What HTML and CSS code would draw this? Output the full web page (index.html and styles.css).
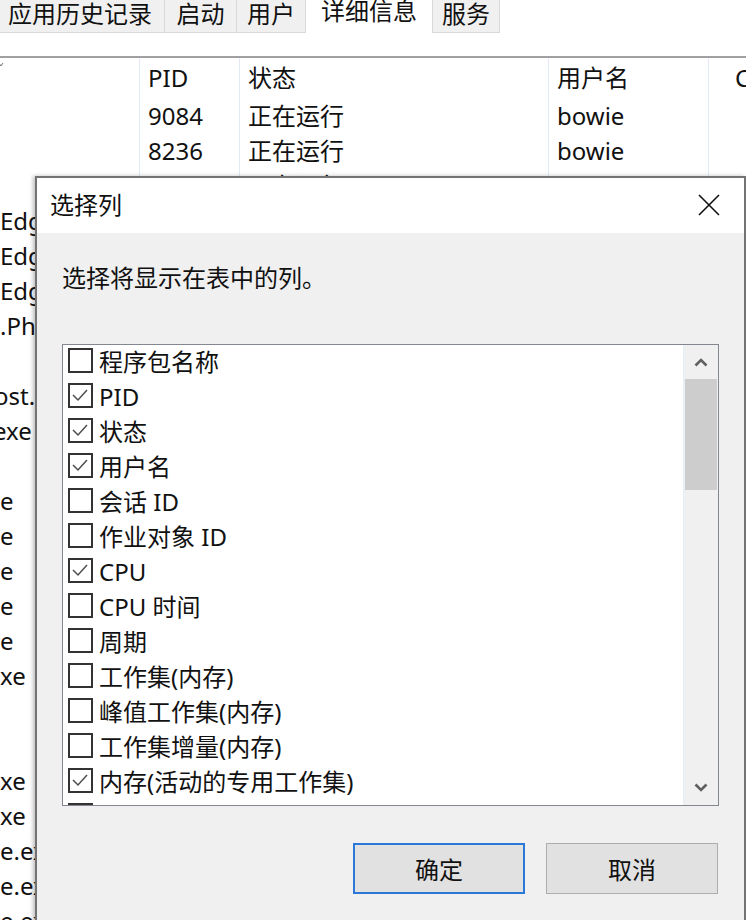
FILE: index.html
```html
<!DOCTYPE html>
<html lang="zh-CN">
<head>
<meta charset="utf-8">
<title>选择列</title>
<link rel="stylesheet" href="styles.css">
</head>
<body>
<div class="page">
  <div class="tabs">
    <div class="tab t1">应用历史记录</div>
    <div class="tab t2">启动</div>
    <div class="tab t3">用户</div>
    <div class="tab t4 active">详细信息</div>
    <div class="tab t5">服务</div>
  </div>

  <div class="table">
    <div class="row head">
      <div class="cell name"><svg class="sort" width="6" height="6" viewBox="0 0 6 6"><path d="M0 1 L2 4 L4 1" fill="none" stroke="#777" stroke-width="1"/></svg></div>
      <div class="cell">PID</div>
      <div class="cell">状态</div>
      <div class="cell">用户名</div>
      <div class="cell cpu">CPU</div>
    </div>
    <div class="row"><div class="cell name"></div><div class="cell">9084</div><div class="cell">正在运行</div><div class="cell">bowie</div><div class="cell"></div></div>
    <div class="row"><div class="cell name"></div><div class="cell">8236</div><div class="cell">正在运行</div><div class="cell">bowie</div><div class="cell"></div></div>
    <div class="row"><div class="cell name"></div><div class="cell">7692</div><div class="cell">正在运行</div><div class="cell">bowie</div><div class="cell"></div></div>
    <div class="row"><div class="cell name">Edg</div><div class="cell"></div><div class="cell"></div><div class="cell"></div><div class="cell"></div></div>
    <div class="row"><div class="cell name">Edg</div><div class="cell"></div><div class="cell"></div><div class="cell"></div><div class="cell"></div></div>
    <div class="row"><div class="cell name">Edg</div><div class="cell"></div><div class="cell"></div><div class="cell"></div><div class="cell"></div></div>
    <div class="row"><div class="cell name">.Pho</div><div class="cell"></div><div class="cell"></div><div class="cell"></div><div class="cell"></div></div>
    <div class="row"><div class="cell name"></div><div class="cell"></div><div class="cell"></div><div class="cell"></div><div class="cell"></div></div>
    <div class="row"><div class="cell name"><span class="frag s6">ost.e</span></div><div class="cell"></div><div class="cell"></div><div class="cell"></div><div class="cell"></div></div>
    <div class="row"><div class="cell name"><span class="frag s7">exe</span></div><div class="cell"></div><div class="cell"></div><div class="cell"></div><div class="cell"></div></div>
    <div class="row"><div class="cell name"></div><div class="cell"></div><div class="cell"></div><div class="cell"></div><div class="cell"></div></div>
    <div class="row"><div class="cell name">e</div><div class="cell"></div><div class="cell"></div><div class="cell"></div><div class="cell"></div></div>
    <div class="row"><div class="cell name">e</div><div class="cell"></div><div class="cell"></div><div class="cell"></div><div class="cell"></div></div>
    <div class="row"><div class="cell name">e</div><div class="cell"></div><div class="cell"></div><div class="cell"></div><div class="cell"></div></div>
    <div class="row"><div class="cell name">e</div><div class="cell"></div><div class="cell"></div><div class="cell"></div><div class="cell"></div></div>
    <div class="row"><div class="cell name">e</div><div class="cell"></div><div class="cell"></div><div class="cell"></div><div class="cell"></div></div>
    <div class="row"><div class="cell name">xe</div><div class="cell"></div><div class="cell"></div><div class="cell"></div><div class="cell"></div></div>
    <div class="row"><div class="cell name"></div><div class="cell"></div><div class="cell"></div><div class="cell"></div><div class="cell"></div></div>
    <div class="row"><div class="cell name"></div><div class="cell"></div><div class="cell"></div><div class="cell"></div><div class="cell"></div></div>
    <div class="row"><div class="cell name">xe</div><div class="cell"></div><div class="cell"></div><div class="cell"></div><div class="cell"></div></div>
    <div class="row"><div class="cell name">xe</div><div class="cell"></div><div class="cell"></div><div class="cell"></div><div class="cell"></div></div>
    <div class="row"><div class="cell name">e.ex</div><div class="cell"></div><div class="cell"></div><div class="cell"></div><div class="cell"></div></div>
    <div class="row"><div class="cell name">e.ex</div><div class="cell"></div><div class="cell"></div><div class="cell"></div><div class="cell"></div></div>
    <div class="row"><div class="cell name">e.ex</div><div class="cell"></div><div class="cell"></div><div class="cell"></div><div class="cell"></div></div>
  </div>

  <div class="dialog">
    <div class="titlebar">
      <span class="title">选择列</span>
      <svg class="close" width="22" height="22" viewBox="0 0 22 22"><path d="M1 1 L21 21 M21 1 L1 21" stroke="#111" stroke-width="1.6" fill="none"/></svg>
    </div>
    <div class="dbody">
      <p class="prompt">选择将显示在表中的列。</p>
      <div class="listbox">
        <div class="items">
          <div class="item"><span class="box"></span><span class="label">程序包名称</span></div>
          <div class="item"><span class="box checked"><svg viewBox="0 0 21 21" width="21" height="21"><path d="M3 10 L8 15 L17 5" fill="none" stroke="#4d4d4d" stroke-width="1.5"/></svg></span><span class="label">PID</span></div>
          <div class="item"><span class="box checked"><svg viewBox="0 0 21 21" width="21" height="21"><path d="M3 10 L8 15 L17 5" fill="none" stroke="#4d4d4d" stroke-width="1.5"/></svg></span><span class="label">状态</span></div>
          <div class="item"><span class="box checked"><svg viewBox="0 0 21 21" width="21" height="21"><path d="M3 10 L8 15 L17 5" fill="none" stroke="#4d4d4d" stroke-width="1.5"/></svg></span><span class="label">用户名</span></div>
          <div class="item"><span class="box"></span><span class="label">会话 ID</span></div>
          <div class="item"><span class="box"></span><span class="label">作业对象 ID</span></div>
          <div class="item"><span class="box checked"><svg viewBox="0 0 21 21" width="21" height="21"><path d="M3 10 L8 15 L17 5" fill="none" stroke="#4d4d4d" stroke-width="1.5"/></svg></span><span class="label">CPU</span></div>
          <div class="item"><span class="box"></span><span class="label">CPU 时间</span></div>
          <div class="item"><span class="box"></span><span class="label">周期</span></div>
          <div class="item"><span class="box"></span><span class="label">工作集(内存)</span></div>
          <div class="item"><span class="box"></span><span class="label">峰值工作集(内存)</span></div>
          <div class="item"><span class="box"></span><span class="label">工作集增量(内存)</span></div>
          <div class="item"><span class="box checked"><svg viewBox="0 0 21 21" width="21" height="21"><path d="M3 10 L8 15 L17 5" fill="none" stroke="#4d4d4d" stroke-width="1.5"/></svg></span><span class="label">内存(活动的专用工作集)</span></div>
          <div class="item"><span class="box"></span><span class="label">内存(专用工作集)</span></div>
        </div>
        <div class="scrollbar">
          <div class="arrow"><svg width="14" height="10" viewBox="0 0 14 10"><path d="M1.5 8.5 L7 3 L12.5 8.5" fill="none" stroke="#606060" stroke-width="2.6"/></svg></div>
          <div class="track"><div class="thumb"></div></div>
          <div class="arrow"><svg width="14" height="10" viewBox="0 0 14 10"><path d="M1.5 1.5 L7 7 L12.5 1.5" fill="none" stroke="#606060" stroke-width="2.6"/></svg></div>
        </div>
      </div>
      <div class="buttons">
        <button class="btn primary">确定</button>
        <button class="btn">取消</button>
      </div>
    </div>
  </div>
</div>
</body>
</html>
```

FILE: styles.css
```css
html, body {
  margin: 0;
  padding: 0;
  background: #ffffff;
}
body {
  font-family: "Noto Sans", "Noto Sans CJK SC", sans-serif;
  font-size: 24px;
  color: #111;
}
.page {
  position: relative;
  width: 746px;
  height: 920px;
  overflow: hidden;
}
.tabs {
  display: flex;
  height: 33px;
}
.tab {
  box-sizing: border-box;
  height: 33px;
  background: #f0f0f0;
  border-right: 1px solid #d9d9d9;
  border-bottom: 1px solid #d9d9d9;
  text-align: center;
  padding-top: 1px;
  line-height: 26px;
  white-space: nowrap;
}
.t1 { width: 165px; padding-right: 4px; }
.t2 { width: 72px; }
.t3 { width: 69px; }
.t4 { width: 127px; }
.t5 { width: 67px; }
.tab.active {
  background: #ffffff;
  border-bottom: none;
  padding-top: 0;
  line-height: 22px;
}
.table {
  margin-top: 23px;
  border-top: 2px solid #a0a0a0;
}
.row {
  display: grid;
  grid-template-columns: 140px 100px 309px 160px 1fr;
  height: 35px;
  line-height: 35px;
}
.row.head {
  height: 40px;
  line-height: 40px;
}
.cell {
  box-sizing: border-box;
  padding-left: 8px;
  border-right: 1px solid #e3eaf3;
  white-space: nowrap;
  overflow: hidden;
}
.cell:last-child { border-right: none; }
.cell.name { padding-left: 0; }
.cell.cpu { padding-left: 26px; }
.frag { display: inline-block; }
.s6 { margin-left: -6px; }
.s7 { margin-left: -7px; }
.sort {
  display: block;
  margin-top: 4px;
  margin-left: -1px;
}

.dialog {
  position: absolute;
  left: 35px;
  top: 176px;
  width: 711px;
  height: 780px;
  box-sizing: border-box;
  border: 2px solid #737373;
  background: #f0f0f0;
  box-shadow: -2px 0 4px rgba(0,0,0,0.25);
}
.titlebar {
  height: 55px;
  background: #ffffff;
  display: flex;
  align-items: center;
  justify-content: space-between;
  padding: 0 24px 0 13px;
}
.title {
  line-height: 30px;
  margin-top: -2px;
}
.close {
  display: block;
  margin-top: -2px;
}
.dbody {
  padding: 0 25px 0 25px;
}
.prompt {
  margin: 30px 0 0 0;
  line-height: 30px;
}
.listbox {
  margin-top: 51px;
  height: 462px;
  box-sizing: border-box;
  border: 1px solid #828790;
  background: #ffffff;
  display: flex;
}
.items {
  flex: 1;
  overflow: hidden;
  padding: 3px 0 0 5px;
}
.item {
  display: flex;
  align-items: flex-start;
  height: 35px;
  gap: 6px;
}
.box {
  box-sizing: border-box;
  width: 25px;
  height: 25px;
  border: 2px solid #333333;
  background: #ffffff;
  flex: none;
}
.box svg { display: block; }
.label {
  line-height: 27px;
  white-space: nowrap;
}
.scrollbar {
  width: 34px;
  flex: none;
  background: #f0f0f0;
  border-left: 1px solid #e6eef7;
  display: flex;
  flex-direction: column;
}
.arrow {
  height: 34px;
  display: flex;
  align-items: center;
  justify-content: center;
}
.track {
  flex: 1;
  padding: 0 1px;
}
.thumb {
  height: 111px;
  background: #cdcdcd;
}
.buttons {
  display: flex;
  justify-content: flex-end;
  gap: 21px;
  margin-top: 37px;
  padding-right: 1px;
}
.btn {
  width: 172px;
  height: 51px;
  box-sizing: border-box;
  background: #e1e1e1;
  border: 1px solid #adadad;
  font-family: "Noto Sans", "Noto Sans CJK SC", sans-serif;
  font-size: 24px;
  color: #111;
  padding: 0;
}
.btn.primary {
  border: 2px solid #2b78d8;
}
```
